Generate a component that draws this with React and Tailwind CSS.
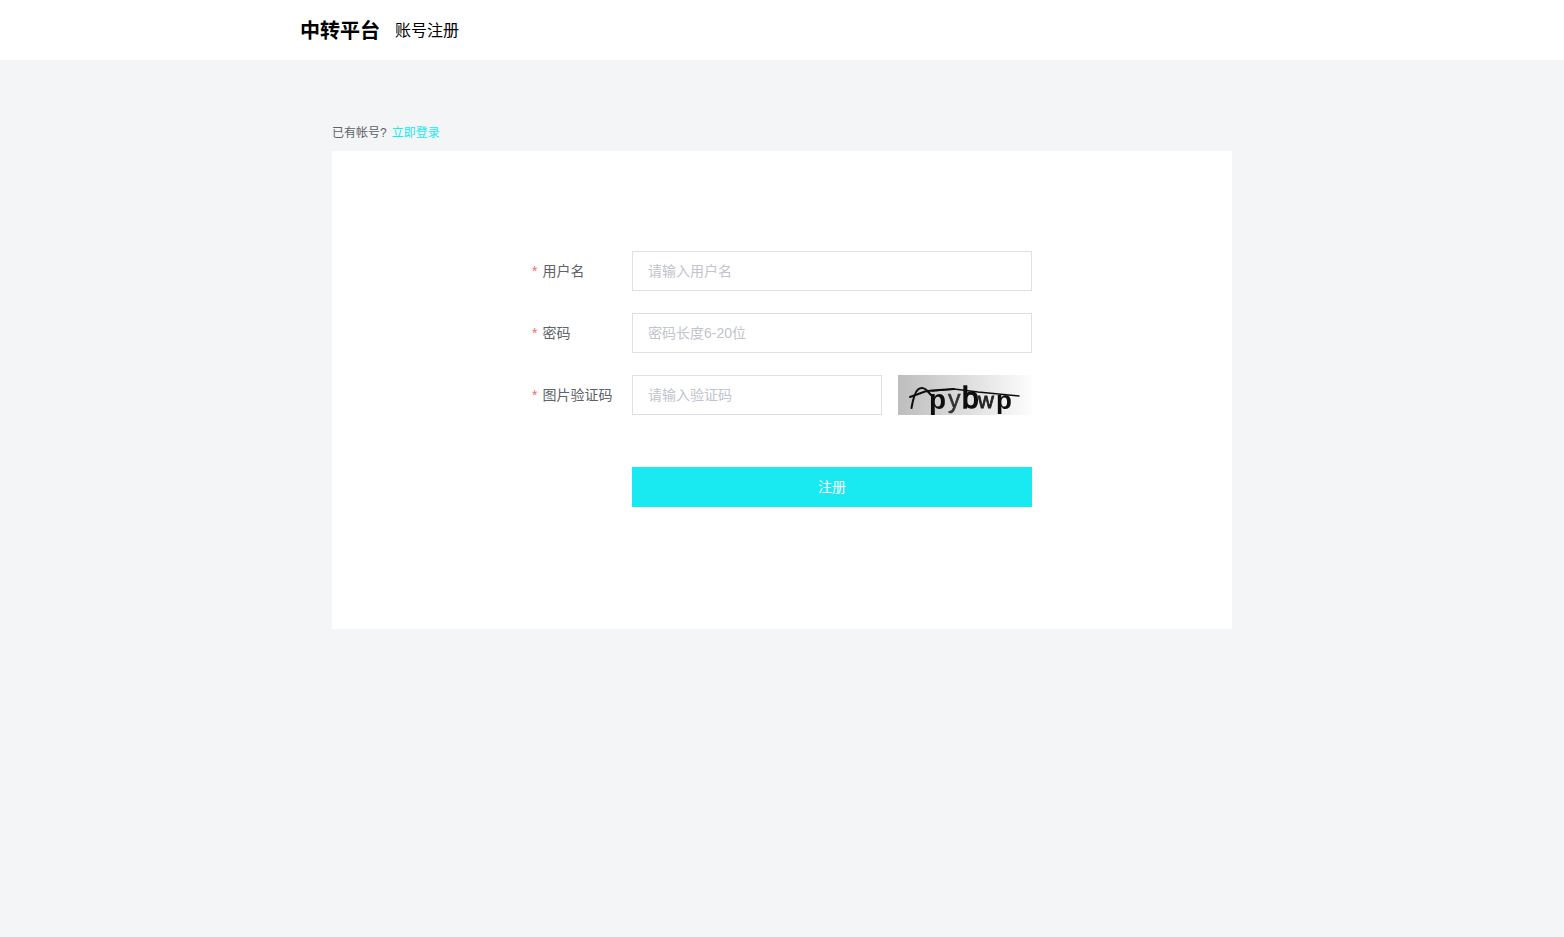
import { useState } from "react"

export default function App() {
    return <div className="min-h-screen bg-[#f3f5f7] font-['Liberation_Sans','Noto_Sans_CJK_SC',sans-serif] text-[#606266]">
        <Header />
        <main className="max-w-[900px] mx-auto pt-[65px]">
            <div className="text-xs leading-4 flex gap-[5px] pb-[10px]">
                <span>已有帐号?</span>
                <a href="#login" className="text-[#19e9f1]">立即登录</a>
            </div>
            <RegisterForm />
        </main>
    </div>
}

function Header() {
    return <header className="bg-white text-black">
        <div className="max-w-[964px] mx-auto h-15 pt-0.5 flex items-center gap-[15px]">
            <h1 className="text-xl font-bold">中转平台</h1>
            <span className="text-base">账号注册</span>
        </div>
    </header>
}

function RegisterForm() {
    const [username, setUsername] = useState("")
    const [password, setPassword] = useState("")
    const [code, setCode] = useState("")
    return <div className="bg-white pt-25 pb-[122px]">
        <form onSubmit={(e) => e.preventDefault()} className="max-w-[500px] mx-auto flex flex-col gap-[22px] text-sm">
            <Field id="username" label="用户名">
                <TextBox id="username" placeholder="请输入用户名" value={username} onChange={(e) => {
                    setUsername(e.target.value)
                }} />
            </Field>
            <Field id="password" label="密码">
                <TextBox id="password" type="password" placeholder="密码长度6-20位" value={password} onChange={(e) => {
                    setPassword(e.target.value)
                }} />
            </Field>
            <Field id="code" label="图片验证码">
                <div className="flex gap-4">
                    <TextBox id="code" placeholder="请输入验证码" value={code} onChange={(e) => {
                        setCode(e.target.value)
                    }} />
                    <Captcha />
                </div>
            </Field>
            <div className="pl-25 pt-[30px]">
                <button type="submit" className="w-full h-10 bg-[#19e9f1] text-white cursor-pointer">注册</button>
            </div>
        </form>
    </div>
}

function Field({ id, label, children }) {
    return <div className="flex items-center">
        <label htmlFor={id} className="w-25 shrink-0 flex gap-[5px]">
            <span className="text-[#f56c6c]">*</span>
            {label}
        </label>
        <div className="grow">{children}</div>
    </div>
}

function TextBox({ id, type = "text", placeholder, value, onChange }) {
    return <input id={id} type={type} placeholder={placeholder} value={value} onChange={onChange}
        className="w-full min-w-0 h-10 px-[15px] bg-white border border-[#dcdfe6] outline-none placeholder:text-[#c0c4cc] focus:border-[#19e9f1]" />
}

function Captcha() {
    return <svg viewBox="0 0 134 40" className="w-[134px] h-10 shrink-0 overflow-visible" role="img" aria-label="验证码">
        <defs>
            <linearGradient id="captcha-bg">
                <stop offset="0" stopColor="#bdbdbd" />
                <stop offset="1" stopColor="#fdfdfd" />
            </linearGradient>
            <filter id="soft">
                <feGaussianBlur stdDeviation="0.6" />
            </filter>
        </defs>
        <rect width="134" height="40" fill="url(#captcha-bg)" />
        <g filter="url(#soft)" fill="#0a0a0a" fontFamily="'Liberation Sans', sans-serif" fontWeight="700">
            <text x="31" y="34" fontSize="28">p</text>
            <text x="50" y="33" fontSize="25" fontWeight="400" fill="#333" stroke="#333" strokeWidth="0.5">y</text>
            <text x="64" y="33" fontSize="30" fontWeight="400" stroke="#0a0a0a" strokeWidth="1.3">b</text>
            <text x="80" y="33" fontSize="22" fontWeight="400" fill="#222" stroke="#222" strokeWidth="0.8">w</text>
            <text x="98" y="34" fontSize="26">p</text>
        </g>
        <g filter="url(#soft)" fill="none" stroke="#111" strokeLinecap="round">
            <path d="M13.5 33 C15 24 17 17 20 14.500 C23 12 27 13 29 15.500 L33 20" strokeWidth="2" />
            <path d="M12 22 L27 16.500 L34 15.500 L56 14" strokeWidth="2" />
            <path d="M34 16 L56 14 L80 17 L121 21" strokeWidth="1.600" />
        </g>
    </svg>
}
